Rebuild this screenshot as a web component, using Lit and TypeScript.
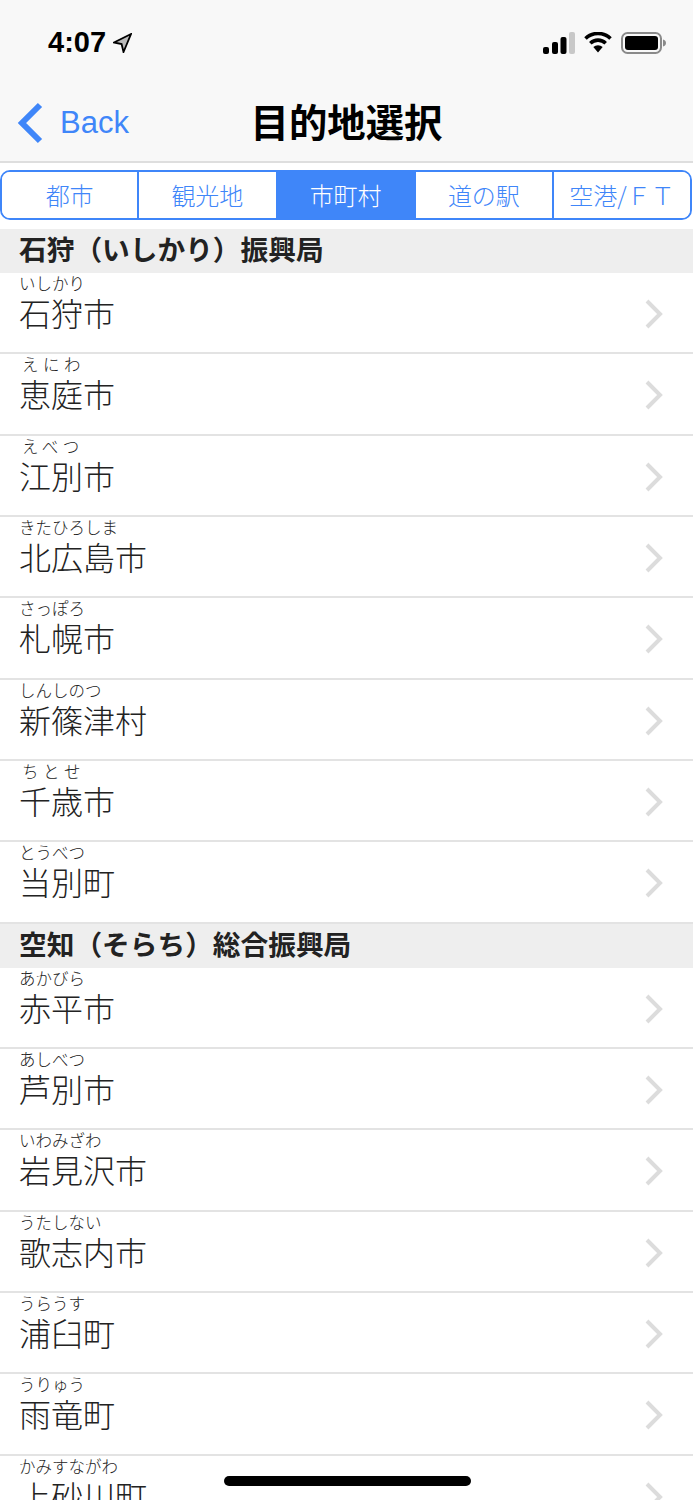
import { LitElement, html, css } from "lit";
import { customElement } from "lit/decorators.js";

type Row = [string, string, boolean?];
const groups: { title: string; rows: Row[] }[] = [
  {
    title: "石狩（いしかり）振興局",
    rows: [
      ["いしかり", "石狩市"],
      ["えにわ", "恵庭市", true],
      ["えべつ", "江別市", true],
      ["きたひろしま", "北広島市"],
      ["さっぽろ", "札幌市"],
      ["しんしのつ", "新篠津村"],
      ["ちとせ", "千歳市", true],
      ["とうべつ", "当別町"],
    ],
  },
  {
    title: "空知（そらち）総合振興局",
    rows: [
      ["あかびら", "赤平市"],
      ["あしべつ", "芦別市"],
      ["いわみざわ", "岩見沢市"],
      ["うたしない", "歌志内市"],
      ["うらうす", "浦臼町"],
      ["うりゅう", "雨竜町"],
      ["かみすながわ", "上砂川町"],
    ],
  },
];
const tabs = ["都市", "観光地", "市町村", "道の駅", "空港/\uFF26\uFF34"];

@customElement("app-root")
export class AppRoot extends LitElement {
  static styles = css`
    :host {
      display: block;
      position: relative;
      width: 693px;
      height: 1500px;
      overflow: hidden;
      background: #fff;
      font-family: "Noto Sans CJK JP", "Liberation Sans", sans-serif;
      color: #222;
    }
    .top {
      height: 161px;
      background: #f8f8f8;
      border-bottom: 2px solid #dedede;
      display: flex;
      flex-direction: column;
    }
    .status {
      height: 82px;
      display: flex;
      align-items: center;
      justify-content: space-between;
      padding: 3px 27px 0 48px;
      box-sizing: border-box;
    }
    .time {
      display: flex;
      align-items: center;
      gap: 7px;
      font: 700 29px/1 "Liberation Sans", sans-serif;
      color: #000;
    }
    .icons {
      display: flex;
      align-items: center;
      gap: 9px;
    }
    .nav {
      flex: 1;
      position: relative;
      display: flex;
      align-items: center;
      justify-content: center;
    }
    .back {
      position: absolute;
      left: 17px;
      top: 20px;
      display: flex;
      align-items: center;
      gap: 17px;
      color: #3f86f9;
      font: 400 31px/42px "Liberation Sans", sans-serif;
    }
    .title {
      font-size: 38.4px;
      font-weight: 700;
      line-height: 48px;
      color: #000;
      margin-top: -4px;
    }
    .segs {
      display: flex;
      height: 50px;
      box-sizing: border-box;
      margin: 7px 1px 9px 0;
      border: 2px solid #3f86f9;
      border-radius: 10px;
      overflow: hidden;
    }
    .seg {
      width: 138.25px;
      flex: none;
      box-sizing: border-box;
      border-right: 2px solid #3f86f9;
      color: #3f86f9;
      background: #fff;
      font-size: 24px;
      font-weight: 300;
      line-height: 46px;
      text-align: center;
    }
    .seg:first-child {
      width: 137.25px;
    }
    .seg:last-child {
      border-right: none;
      flex: 1;
      width: auto;
      white-space: nowrap;
    }
    .seg.on {
      background: #3f86f9;
      color: #fff;
    }
    .head {
      height: 44px;
      background: #eeeeee;
      padding-left: 19px;
      font-size: 27.7px;
      font-weight: 700;
      line-height: 39px;
      color: #222;
      white-space: nowrap;
    }
    .row {
      height: 81.33px;
      box-sizing: border-box;
      border-bottom: 2px solid #e3e3e3;
      padding-left: 19px;
      position: relative;
    }
    .kana {
      font-size: 16.5px;
      font-weight: 300;
      line-height: 20px;
      color: #222;
    }
    .kana.wide {
      letter-spacing: 4.5px;
      padding-left: 3px;
    }
    .name {
      font-size: 32px;
      font-weight: 300;
      line-height: 40px;
      color: #222;
      margin-top: -1px;
    }
    .chev {
      position: absolute;
      right: 30px;
      top: 26px;
    }
    .indicator {
      position: absolute;
      left: 224px;
      top: 1476px;
      width: 247px;
      height: 10px;
      border-radius: 5px;
      background: #000;
    }
  `;

  render() {
    return html`
      <div class="top">
        <div class="status">
          <div class="time">
            4:07
            <svg width="19" height="20" viewBox="0 0 19 20">
              <path d="M18 1 1 9.500l7.600 1.600L10.500 19z" fill="#bbb" stroke="#000" stroke-width="1.800" stroke-linejoin="miter" />
            </svg>
          </div>
          <div class="icons">
            <svg width="32" height="22" viewBox="0 0 32 22">
              <rect x="0" y="15" width="6" height="7" rx="2" fill="#000" />
              <rect x="9" y="10" width="6" height="12" rx="2" fill="#000" />
              <rect x="17.500" y="5" width="6" height="17" rx="2" fill="#000" />
              <rect x="26" y="0" width="6" height="22" rx="2" fill="#c8c8c8" />
            </svg>
            <svg width="28" height="21" viewBox="0 0 28 21">
              <path d="M1.500 6.500a18 18 0 0 1 25 0" fill="none" stroke="#000" stroke-width="3.600" />
              <path d="M6.300 11.200a11.200 11.200 0 0 1 15.400 0" fill="none" stroke="#000" stroke-width="3.600" />
              <path d="M9.300 15 14 20.500 18.700 15a7 7 0 0 0-9.400 0z" fill="#000" />
            </svg>
            <svg width="45" height="22" viewBox="0 0 45 22">
              <rect x="1" y="1" width="39" height="20" rx="5.500" fill="none" stroke="#8a8a8a" stroke-width="2" />
              <rect x="4" y="4" width="33" height="14" rx="3" fill="#000" />
              <path d="M42 7.500c1.800.4 3 1.800 3 3.500s-1.200 3.100-3 3.500z" fill="#8a8a8a" />
            </svg>
          </div>
        </div>
        <div class="nav">
          <div class="back">
            <svg width="26" height="42" viewBox="0 0 26 42">
              <path d="M23 3 5 21l18 18" fill="none" stroke="#3f86f9" stroke-width="6" />
            </svg>
            Back
          </div>
          <div class="title">目的地選択</div>
        </div>
      </div>
      <div class="segs">
        ${tabs.map((t, i) => html`<div class="seg ${i === 2 ? "on" : ""}">${t}</div>`)}
      </div>
      ${groups.map(
        (g) => html`
          <div class="head">${g.title}</div>
          ${g.rows.map(
            ([kana, name, wide]) => html`
              <div class="row">
                <div class="kana ${wide ? "wide" : ""}">${kana}</div>
                <div class="name">${name}</div>
                <svg class="chev" width="18" height="30" viewBox="0 0 18 30">
                  <path d="M2 2l13 13L2 28" fill="none" stroke="#dcdcdc" stroke-width="4" />
                </svg>
              </div>
            `,
          )}
        `,
      )}
      <div class="indicator"></div>
    `;
  }
}
